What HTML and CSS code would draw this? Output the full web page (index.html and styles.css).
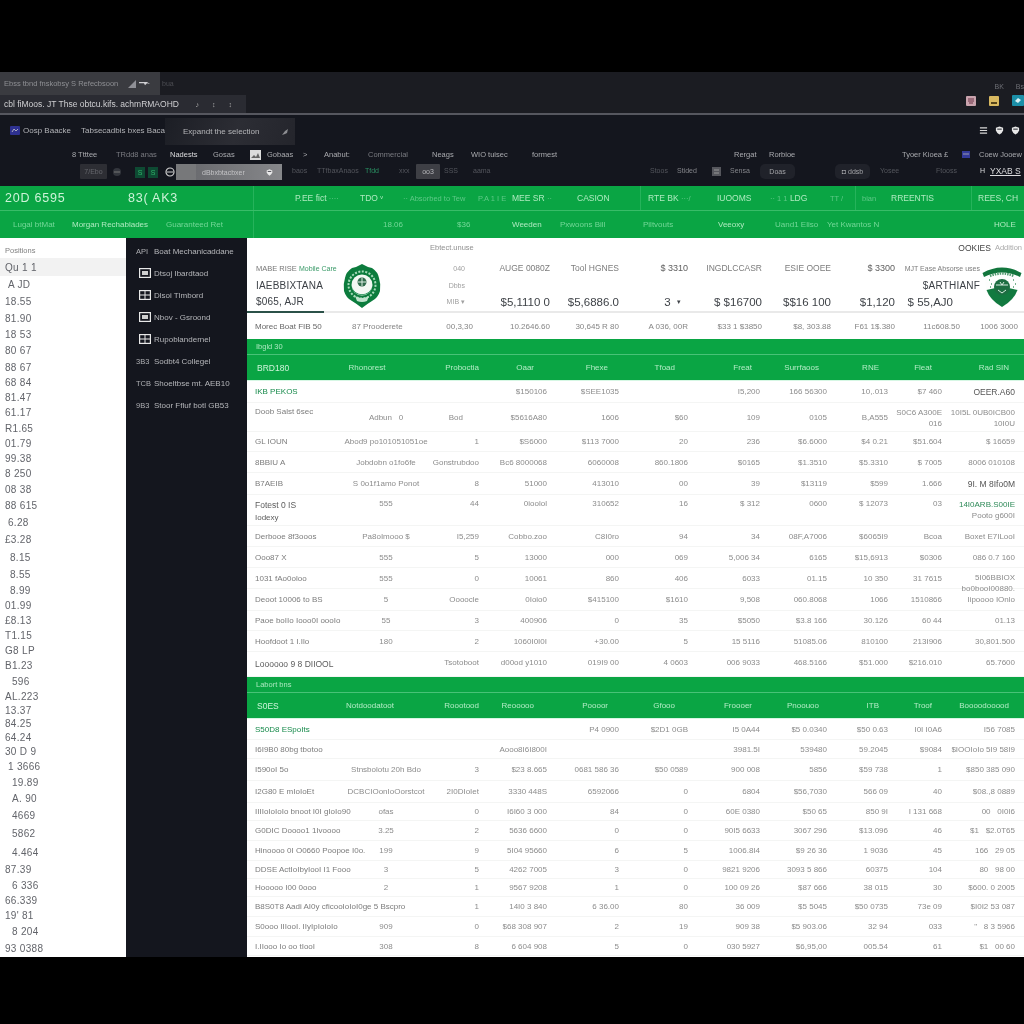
FILE: index.html
```html
<!DOCTYPE html>
<html lang="en">
<head>
<meta charset="utf-8">
<title>Casino ledger</title>
<link rel="stylesheet" href="styles.css">
</head>
<body>
<svg class="defs" width="0" height="0" aria-hidden="true">
  <symbol id="box" viewBox="0 0 12 10"><rect x=".6" y=".6" width="10.8" height="8.8" fill="none" stroke="#e8e8e8" stroke-width="1.2"/><path d="M3 3h6v4H3z" fill="#cfcfcf"/></symbol>
  <symbol id="gridbox" viewBox="0 0 12 10"><rect x=".6" y=".6" width="10.8" height="8.8" fill="none" stroke="#e8e8e8" stroke-width="1.2"/><path d="M6 1v8M1 5h10" stroke="#e8e8e8"/></symbol>
  <symbol id="tag" viewBox="0 0 10 10"><path d="M1 2l4-1.500L9 2v3Q8 8 5 9.500 2 8 1 5z" fill="#e8e8e8"/><path d="M2.500 3.500h5" stroke="#14161e"/></symbol>
</svg>
<div class="frame">
  <header class="chrome">
    <div class="chrome-left">
      <div class="chrome-tabrow">
        <div class="tab-one">
          <span>Ebss tbnd fnskobsy S Refecbsoon</span>
          <svg class="tab-mark" width="24" height="10" viewBox="0 0 24 10"><path d="M0 9L8 1v8z" fill="#8f9096"/><path d="M11 3h8l3 2-3-.800-2 2-1-2h-5z" fill="#d0d0d3"/></svg>
        </div>
        <span class="tab-extra">bua</span>
      </div>
      <div class="tab-two">
        <span class="tab-two-title">cbl fiMoos. JT Thse obtcu.kifs. achmRMAOHD</span>
        <span class="tab-two-tools"><i>♪</i><i>↕</i><i>↕</i></span>
      </div>
    </div>
    <div class="chrome-right">
      <div class="chrome-labels"><span>BK</span><span>Bs</span></div>
      <div class="chrome-apps">
        <svg width="10" height="10" viewBox="0 0 10 10"><rect width="10" height="10" rx="1" fill="#c9a3ad"/><path d="M2 3h6M2 5h6M3 7h4" stroke="#6c3346"/></svg>
        <svg width="10" height="10" viewBox="0 0 10 10"><rect width="10" height="10" rx="1" fill="#d8b860"/><path d="M2 6h6v2H2z" fill="#55431a"/></svg>
        <svg width="12" height="11" viewBox="0 0 12 11"><rect width="12" height="11" rx="1" fill="#1c8fa8"/><path d="M3 6l3-3 3 2-3 3z" fill="#d8f2f7"/></svg>
      </div>
    </div>
  </header>
  <div class="chrome-rule"></div>

  <nav class="nav">
    <div class="nav-a">
      <svg class="nav-a-logo" width="10" height="9" viewBox="0 0 10 9"><rect width="10" height="9" rx="1" fill="#2e3190"/><path d="M2 6l2-3 2 2 2-2" stroke="#aab" fill="none"/></svg>
      <span class="nav-brand">Oosp Baacke</span>
      <span class="nav-title">Tabsecadbis bxes Bacace</span>
      <div class="nav-tab">
        <span>Expandt the selection</span>
        <svg width="8" height="8" viewBox="0 0 8 8"><path d="M1 7l3-4 3-2-1 4-2 1z" fill="#8d8e92"/></svg>
      </div>
      <div class="nav-a-icons">
        <svg width="9" height="9" viewBox="0 0 10 10"><path d="M1 2h8M1 5h8M1 8h8" stroke="#d8d8d8" stroke-width="1.300"/></svg>
        <svg width="9" height="9"><use href="#tag"/></svg>
        <svg width="9" height="9"><use href="#tag"/></svg>
      </div>
    </div>
    <div class="nav-b">
      <span>8 Ttttee</span><span class="dim">TRdd8 anas</span><span class="hi">Nadests</span><span>Gosas</span>
      <svg width="11" height="10" viewBox="0 0 11 10"><rect width="11" height="10" fill="#dcdcdc"/><path d="M1 8l3-3 2 2 2-4 2 5z" fill="#666"/></svg>
      <span>Gobaas</span><span>&gt;</span><span>Anabut:</span><span class="dim">Commercial</span><span>Neags</span><span>WIO tuisec</span><span>formest</span><span>Rergat</span><span>Rorbioe</span><span>Tyoer Kioea £</span>
      <svg width="8" height="7" viewBox="0 0 8 7"><rect width="8" height="7" fill="#343a9a"/><path d="M1 3h6" stroke="#99a"/></svg>
      <span>Coew Jooew</span>
    </div>
    <div class="nav-c">
      <span class="chip chip-dim">7/Ebo</span>
      <svg width="10" height="10" viewBox="0 0 10 10"><circle cx="5" cy="5" r="4" fill="#33363d"/><path d="M2 5h6" stroke="#777"/></svg>
      <span class="chip-green">S</span>
      <span class="chip-green">S</span>
      <svg width="10" height="10" viewBox="0 0 10 10"><circle cx="5" cy="5" r="4" fill="none" stroke="#cfcfcf" stroke-width="1.200"/><path d="M2 5h6" stroke="#cfcfcf"/></svg>
      <span class="chip-light"></span>
      <div class="search"><span>dBbxbtacbxer</span><svg width="7" height="7"><use href="#tag"/></svg></div>
      <span></span>
      <span class="fade">baos</span><span class="fade">TTfbaxAnaos</span><span class="fade-green">Tfdd</span><span class="fade">xxx</span>
      <span class="chip chip-mid">oo3</span><span class="fade">SSS</span><span class="fade">aama</span>
      <span class="fade">Stoos</span><span class="soft">Stided</span>
      <svg width="9" height="9" viewBox="0 0 9 9"><rect width="9" height="9" fill="#55565c"/><path d="M2 3h5M2 6h5" stroke="#999"/></svg>
      <span class="soft">Sensa</span>
      <span class="chip chip-wide">Doas</span>
      <span class="chip chip-wide">◘ ddsb</span>
      <span class="fade">Yosee</span><span class="fade">Ftooss</span><span class="hi">H</span><span class="hi under">YXAB S</span>
    </div>
  </nav>

  <section class="band">
    <div class="band-a">
      <span class="band-big">20D 6595</span><span class="band-big">83( AK3</span><i class="sep"></i>
      <span>P.EE fict <em>····</em></span><span>TDO ᵛ</span><span><em>·· Absorbed to Tew</em></span><span><em>P.A 1 I E</em></span><span>MEE SR <em>··</em></span><span>CASION</span><i class="sep"></i>
      <span>RTE BK <em>···/</em></span><span>IUOOMS</span><span><em>·· 1 1</em> LDG</span><span><em>TT /</em></span><i class="sep"></i>
      <span><em>bian</em></span><span>RREENTIS</span><i class="sep"></i><span>REES, CH</span>
    </div>
    <div class="band-b">
      <span class="dimg">Lugal btMat</span><span>Morgan Rechablades</span><span class="dimg">Guaranteed Ret</span><i class="sep"></i>
      <span class="dimg">18.06</span><span class="dimg">$36</span><span>Weeden</span><span class="dimg">Pxwoons Bill</span><span class="dimg">Piltvouts</span><span>Veeoxy</span><span class="dimg">Uand1 Eliso</span><span class="dimg">Yet Kwantos N</span><span>HOLE</span>
    </div>
  </section>

  <div class="work">
    <aside class="ledger">
      <div class="ledger-head">Positions</div>
      <ol class="ledger-list">
        <li class="sel">Qu 1 1</li>
        <li class="in1">A JD</li><li>18.55</li><li>81.90</li><li>18 53</li><li>80 67</li><li>88 67</li><li>68 84</li><li>81.47</li><li>61.17</li><li>R1.65</li><li>01.79</li><li>99.38</li><li>8 250</li><li>08 38</li><li>88 615</li><li class="in1">6.28</li><li>£3.28</li><li class="in2">8.15</li><li class="in2">8.55</li><li class="in2">8.99</li><li>01.99</li><li>£8.13</li><li>T1.15</li><li>G8 LP</li><li>B1.23</li><li class="in3">596</li><li>AL.223</li><li>13.37</li><li>84.25</li><li>64.24</li><li>30 D 9</li><li class="in1">1 3666</li><li class="in3">19.89</li><li class="in3">A. 90</li><li class="in3">4669</li><li class="in3">5862</li><li class="in3">4.464</li><li>87.39</li><li class="in3">6 336</li><li>66.339</li><li>19' 81</li><li class="in3">8 204</li><li>93 0388</li>
      </ol>
    </aside>
    <aside class="side">
      <div class="side-item"><span class="side-code">API</span><span>Boat Mechanicaddane</span></div>
      <div class="side-item"><svg class="side-ic"><use href="#box"/></svg><span>Dtsoj Ibardtaod</span></div>
      <div class="side-item"><svg class="side-ic"><use href="#gridbox"/></svg><span>Dlsoi Tlmbord</span></div>
      <div class="side-item"><svg class="side-ic"><use href="#box"/></svg><span>Nbov - Gsroond</span></div>
      <div class="side-item"><svg class="side-ic"><use href="#gridbox"/></svg><span>Rupoblandernel</span></div>
      <div class="side-item"><span class="side-code">3B3</span><span>Sodbt4 Collegel</span></div>
      <div class="side-item"><span class="side-code">TCB</span><span>Shoeltbse mt. AEB10</span></div>
      <div class="side-item"><span class="side-code">9B3</span><span>Stoor Ffluf botl GB53</span></div>
    </aside>
    <main class="main">
      <div class="summary">
        <div class="sum-grid sum-top">
          <span class="sum-note">Ebtect.unuse</span>
          <span class="sum-corner"><b>OOKIES</b> Addition</span>

          <span class="sum-name r2"><span>MABE RISE <u>Mobile Care</u></span></span>
          <svg class="crest" viewBox="0 0 38 44" width="38" height="44">
            <path d="M19 0Q24 3 29 4 35 8 36 14 38 20 37 27 35 34 29 37 24 40 19 44 14 40 9 37 3 34 1 27 0 20 2 14 3 8 9 4 14 3 19 0Z" fill="#0c7c3d"/>
            <circle cx="19" cy="21" r="13.500" fill="none" stroke="#a8dcbb" stroke-width="2" stroke-dasharray="2 1.500"/>
            <circle cx="19" cy="21" r="10.500" fill="#f2f8f3"/>
            <path d="M9 23a10.500 10.500 0 0 0 20 0 10 8 0 0 1-20 0z" fill="#12894a"/>
            <circle cx="19" cy="18" r="4.500" fill="#2f6b4b"/>
            <path d="M19 14v8M15 18h8" stroke="#dcefe3"/>
            <path d="M12 32q7 4 14 0l-2 5q-5 2-10 0z" fill="#bfe3cd"/>
          </svg>
          <span class="sum-label c3 r2">040</span><span class="sum-label r2">AUGE 0080Z</span><span class="sum-label r2">Tool HGNES</span><span class="sum-label sum-dark r2">$ 3310</span><span class="sum-label r2">INGDLCCASR</span><span class="sum-label r2">ESIE OOEE</span><span class="sum-label sum-dark r2">$ 3300</span>
          <span class="sum-label sum-wide r2">MJT Ease Absorse uses</span>
          <svg class="shield" viewBox="0 0 40 42" width="40" height="42">
            <path d="M3 11Q20 3 37 11L36 26Q32 36 20 42 8 36 4 26Z" fill="#fdfefd"/>
            <path d="M.5 8Q20-3 39.500 8L38 12Q20 3 2 12Z" fill="#12763d"/>
            <path d="M8 11Q20 6 32 11" stroke="#4f9a6e" stroke-width="2.500" stroke-dasharray="1.500 1" fill="none"/>
            <path d="M4.500 25Q20 20 35.500 25 32 35 20 42 8 35 4.500 25Z" fill="#127a40"/>
            <ellipse cx="20" cy="22" rx="8" ry="8" fill="#1d6e42"/>
            <path d="M14 20h12M16 25l4 3 4-3M18 17l2 3 2-3" stroke="#d9ece0" fill="none"/>
            <path d="M7 15h1M9 19h1M31 15h1M33 19h1M8 22h1M31 22h1" stroke="#4d9a6e" stroke-width="1.500"/>
          </svg>

          <span class="sum-name sum-head r3">IAEBBIXTANA</span>
          <span class="sum-label c3 r3">Dbbs</span>
          <span class="sum-head sum-rt r3">$ARTHIANF</span>

          <span class="sum-name sum-head r4">$065, AJR</span>
          <span class="sum-label c3 r4">MIB ▾</span>
          <span class="sum-big r4">$5,1110 0</span><span class="sum-big r4">$5,6886.0</span><span class="sum-big sum-pick r4">3 &nbsp;<small>▾</small></span><span class="sum-big r4">$ $16700</span><span class="sum-big r4">$$16 100</span><span class="sum-big r4">$1,120</span><span class="sum-big sum-last r4">$ 55,AJ0</span>
        </div>
        <div class="sum-rule"><i></i></div>
        <div class="sum-grid sum-foot">
          <span class="foot-name">Morec Boat FIB 50</span>
          <span class="foot-two">87 Prooderete</span>
          <span>00,3,30</span><span>10.2646.60</span><span>30,645 R 80</span><span>A 036, 00R</span><span>$33 1 $3850</span><span>$8, 303.88</span><span>F61 1$.380</span><span class="foot-j">11c608.50</span><span class="foot-k">1006 3000</span>
        </div>
      </div>

      <section class="sheet">
        <div class="sheet-label">Ibgld 30</div>
        <div class="tgrid thead">
          <span class="th-first">BRD180</span><span class="th-two">Rhonorest</span><span>Proboctia</span><span>Oaar</span><span>Fhexe</span><span>Tfoad</span><span>Freat</span><span>Surrfaoos</span><span>RNE</span><span>Fleat</span><span>Rad SIN</span>
        </div>
        <div class="tgrid tbody tb-one">
          <span class="green">IKB PEKOS</span><span></span><span></span><span>$150106</span><span>$SEE1035</span><span></span><span>I5,200</span><span>166 56300</span><span>10,.013</span><span>$7 460</span><span class="ink">OEER.A60</span>
          <span class="top">Doob Salst 6sec</span><span class="cn">Adbun &nbsp; 0</span><span class="pull">Bod</span><span>$5616A80</span><span>1606</span><span>$60</span><span>109</span><span>0105</span><span>B,A555</span><span class="stack">S0C6 A300E<br>016</span><span class="stack">10I5L 0UB0ICB00<br>10I0U</span>
          <span class="name">GL IOUN</span><span class="cn">Abod9 po101051051oe</span><span>1</span><span>$S6000</span><span>$113 7000</span><span>20</span><span>236</span><span>$6.6000</span><span>$4 0.21</span><span>$51.604</span><span>$ 16659</span>
          <span class="name">8BBIU A</span><span class="cn">Jobdobn o1fo6fe</span><span>Gonstrubdoo</span><span>Bc6 8000068</span><span>6060008</span><span>860.1806</span><span>$0165</span><span>$1.3510</span><span>$5.3310</span><span>$ 7005</span><span>8006 010108</span>
          <span class="name">B7AEIB</span><span class="cn">S 0o1f1amo Ponot</span><span>8</span><span>51000</span><span>413010</span><span>00</span><span>39</span><span>$13119</span><span>$599</span><span>1.666</span><span class="ink">9I. M 8Ifo0M</span>
          <span class="top name-big">Fotest 0 IS<br><small>Iodexy</small></span><span class="cn top">555</span><span class="top">44</span><span class="top">0ioolol</span><span class="top">310652</span><span class="top">16</span><span class="top">$ 312</span><span class="top">0600</span><span class="top">$ 12073</span><span class="top">03</span><span class="stack"><b>14I0ARB.S00IE</b><br>Pooto g600I</span>
          <span>Derbooe 8f3ooos</span><span class="cn">Pa8oImooo $</span><span>I5,259</span><span>Cobbo.zoo</span><span>C8I0ro</span><span>94</span><span>34</span><span>08F,A7006</span><span>$6065I9</span><span>Bcoa</span><span>Boxet E7ILooI</span>
          <span>Ooo87 X</span><span class="cn">555</span><span>5</span><span>13000</span><span>000</span><span>069</span><span>5,006 34</span><span>6165</span><span>$15,6913</span><span>$0306</span><span>086 0.7 160</span>
          <span>1031 fAo0oloo</span><span class="cn">555</span><span>0</span><span>10061</span><span>860</span><span>406</span><span>6033</span><span>01.15</span><span>10 350</span><span>31 7615</span><span class="stack">5I06BBIOX<br>bo0booI00880.</span>
          <span>Deoot 10006 to BS</span><span class="cn">5</span><span>Oooocle</span><span>0Ioio0</span><span>$415100</span><span>$1610</span><span>9,508</span><span>060.8068</span><span>1066</span><span>1510866</span><span>Iipoooo IOnlo</span>
          <span>Paoe boIIo Iooo0I oooIo</span><span class="cn">55</span><span>3</span><span>400906</span><span>0</span><span>35</span><span>$5050</span><span>$3.8 166</span><span>30.126</span><span>60 44</span><span>01.13</span>
          <span>Hoofdoot 1 I.Ilo</span><span class="cn">180</span><span>2</span><span>1060I0I0I</span><span>+30.00</span><span>5</span><span>15 5116</span><span>51085.06</span><span>810100</span><span>213I906</span><span>30,801.500</span>
          <span class="name-big last">Loooooo 9 8 DIIOOL</span><span></span><span class="last">Tsotoboot</span><span class="last">d00od y1010</span><span class="last">019I9 00</span><span class="last">4 0603</span><span class="last">006 9033</span><span class="last">468.5166</span><span class="last">$51.000</span><span class="last">$216.010</span><span class="last">65.7600</span>
        </div>
      </section>

      <section class="sheet">
        <div class="sheet-label">Labort bns</div>
        <div class="tgrid thead">
          <span class="th-first">S0ES</span><span class="th-two">Notdoodatoot</span><span>Roootood</span><span>Reooooo</span><span>Poooor</span><span>Gfooo</span><span>Froooer</span><span>Pnoouoo</span><span>ITB</span><span>Troof</span><span>Boooodooood</span>
        </div>
        <div class="tgrid tbody tb-two">
          <span class="green">S50D8 ESpoIts</span><span></span><span></span><span></span><span>P4 0900</span><span>$2D1 0GB</span><span>I5 0A44</span><span>$5 0.0340</span><span>$50 0.63</span><span>I0I I0A6</span><span>I56 7085</span>
          <span>I6I9B0 80bg tbotoo</span><span></span><span></span><span>Aooo8I6I800I</span><span></span><span></span><span>3981.5I</span><span>539480</span><span>59.2045</span><span>$9084</span><span>$IOOIoIo 5I9 58I9</span>
          <span>I590oI 5o</span><span class="cn">Stnsbolotu 20h Bdo</span><span>3</span><span>$23 8.665</span><span>0681 586 36</span><span>$50 0589</span><span>900 008</span><span>5856</span><span>$59 738</span><span>1</span><span>$850 385 090</span>
          <span>I2G80 E mIoIoEt</span><span class="cn">DCBCIOonIoOorstcot</span><span>2I0DIoIet</span><span>3330 448S</span><span>6592066</span><span>0</span><span>6804</span><span>$56,7030</span><span>566 09</span><span>40</span><span>$08.,8 0889</span>
          <span>IIIIoIoIoIo bnoot I0I gIoIo90</span><span class="cn">ofas</span><span>0</span><span>I6I60 3 000</span><span>84</span><span>0</span><span>60E 0380</span><span>$50 65</span><span>850 9I</span><span>I 131 668</span><span>00 &nbsp; 0I0I6</span>
          <span>G0DIC Doooo1 1Ivoooo</span><span class="cn">3.25</span><span>2</span><span>5636 6600</span><span>0</span><span>0</span><span>90I5 6633</span><span>3067 296</span><span>$13.096</span><span>46</span><span>$1 &nbsp; $2.0T65</span>
          <span>Hinoooo 0I O0660 Poopoe I0o.</span><span class="cn">199</span><span>9</span><span>5I04 95660</span><span>6</span><span>5</span><span>1006.8I4</span><span>$9 26 36</span><span>1 9036</span><span>45</span><span>166 &nbsp; 29 05</span>
          <span>DDSE ActIoIbyIooI I1 Fooo</span><span class="cn">3</span><span>5</span><span>4262 7005</span><span>3</span><span>0</span><span>9821 9206</span><span>3093 5 866</span><span>60375</span><span>104</span><span>80 &nbsp; 98 00</span>
          <span>Hooooo I00 0ooo</span><span class="cn">2</span><span>1</span><span>9567 9208</span><span>1</span><span>0</span><span>100 09 26</span><span>$87 666</span><span>38 015</span><span>30</span><span>$600. 0 2005</span>
          <span>B8S0T8 Aadi AI0y cficooIoIoI0ge 5 Bscpro</span><span></span><span>1</span><span>14I0 3 840</span><span>6 36.00</span><span>80</span><span>36 009</span><span>$5 5045</span><span>$50 0735</span><span>73e 09</span><span>$I0I2 53 087</span>
          <span>S0ooo IIIooI. IIyIpIoIoIo</span><span class="cn">909</span><span>0</span><span>$68 308 907</span><span>2</span><span>19</span><span>909 38</span><span>$5 903.06</span><span>32 94</span><span>033</span><span>" &nbsp; 8 3 5966</span>
          <span>I.IIooo Io oo tIooI</span><span class="cn">308</span><span>8</span><span>6 604 908</span><span>5</span><span>0</span><span>030 5927</span><span>$6,95,00</span><span>005.54</span><span>61</span><span>$1 &nbsp; 00 60</span>
        </div>
      </section>
    </main>
  </div>
</div>
</body>
</html>
```

FILE: styles.css
```css
* { box-sizing: border-box; }
html, body { margin: 0; height: 100%; background: #000; }
body {
  padding-top: 72px;
  overflow: hidden;
  font-family: "Liberation Sans", Arial, sans-serif;
  font-size: 8.5px;
  color: #777;
}
.defs { position: absolute; }
.frame { width: 1024px; height: 885px; display: flex; flex-direction: column; overflow: hidden; background: #14161e; filter: blur(.3px); }

/* Top chrome */
.chrome { height: 41px; flex: none; display: flex; justify-content: space-between; background: #1b1c22; white-space: nowrap; }
.chrome-left { display: flex; flex-direction: column; }
.chrome-tabrow { display: flex; align-items: center; height: 23px; }
.tab-one { width: 160px; height: 23px; padding: 0 8px 0 4px; display: flex; align-items: center; justify-content: space-between; background: #3a3b40; color: #8e8f93; font-size: 7.5px; }
.tab-extra { margin-left: 2px; color: #4c4d53; font-size: 7px; }
.tab-two { width: 246px; height: 18px; padding: 0 14px 0 4px; display: flex; align-items: center; justify-content: space-between; background: #2a2b32; color: #cfcfd2; font-size: 8.5px; }
.tab-two-tools { display: flex; gap: 13px; color: #aaa; }
.tab-two-tools i { font-style: normal; font-size: 7px; }
.chrome-right { display: flex; flex-direction: column; align-items: flex-end; padding: 7px 0 0; }
.chrome-labels { display: flex; gap: 12px; height: 14px; align-items: center; color: #6d6e74; font-size: 7px; }
.chrome-apps { display: flex; gap: 13px; margin-top: 2px; align-items: center; }
.chrome-rule { height: 2px; flex: none; background: #56575f; }

/* Dark navigation */
.nav { height: 71px; flex: none; background: #14161e; color: #a9aaae; }
.nav-a { height: 30px; padding-left: 10px; display: grid; grid-template-columns: 13px 58px 84px 130px 1fr; align-items: center; white-space: nowrap; font-size: 8px; }
.nav-brand, .nav-title { color: #b2b3b7; }
.nav-tab { height: 27px; align-self: end; padding: 0 6px 0 18px; display: flex; align-items: center; justify-content: space-between; background: linear-gradient(110deg, #1c1e25, #2c2d34 55%, #24252c); color: #b4b5b8; }
.nav-a-icons { display: flex; justify-content: flex-end; align-items: center; gap: 7px; padding-right: 4px; }
.nav-b { height: 19px; padding-left: 72px; display: grid; grid-template-columns: 44px 54px 43px 37px 17px 36px 21px 44px 64px 39px 61px 202px 35px 133px 60px 17px 45px; align-items: center; white-space: nowrap; font-size: 7.5px; }
.dim { color: #7a7b81; }
.hi { color: #dcdcde; }
.nav-c { height: 22px; padding-left: 80px; display: grid; grid-template-columns: 32px 23px 13px 17px 11px 20px 86px 10px 25px 48px 34px 17px 28px 29px 177px 27px 35px 18px 30px 75px 45px 56px 44px 10px 34px; align-items: start; white-space: nowrap; font-size: 7px; }
.nav-c > * { margin-top: 3px; }
.nav-c > .chip, .nav-c > .search, .nav-c > .chip-light { margin-top: 0; }
.chip { height: 15px; display: flex; align-items: center; justify-content: center; border-radius: 1px; }
.chip-dim { width: 27px; background: #2d2e34; color: #66676d; }
.chip-mid { width: 24px; background: #3e3f45; color: #b5b6ba; }
.chip-wide { width: 35px; background: #20222a; color: #a3a4a8; border-radius: 5px; }
.chip-green { width: 10px; height: 11px; background: #0e4a33; color: #2fb56a; display: flex; align-items: center; justify-content: center; font-size: 7px; }
.chip-light { height: 16px; background: #77787a; }
.search { height: 16px; padding: 0 9px 0 6px; display: flex; align-items: center; justify-content: space-between; background: linear-gradient(90deg, #6b6c70, #86878a); color: #c3c3c5; }
.fade { color: #54565d; }
.fade-green { color: #2a8f62; }
.soft { color: #84858a; }
.under { text-decoration: underline; font-size: 8.5px; margin-top: 2px !important; }

/* Green band */
.band { height: 52px; flex: none; background: #0aa544; color: #aeeabf; }
.band-a { height: 25px; padding-left: 5px; display: grid; grid-template-columns: 123px 125px 42px 65px 43px 75px 34px 65px 63px 8px 69px 53px 60px 25px 7px 29px 80px 7px 46px; align-items: center; white-space: nowrap; font-size: 8.5px; border-bottom: 1px solid #38bc68; }
.band-a em { font-style: normal; color: #5ec987; font-size: 7.5px; }
.band-big { font-size: 12.5px; letter-spacing: .8px; color: #cdf3d8; }
.band-b { height: 27px; padding-left: 13px; display: grid; grid-template-columns: 59px 94px 87px 130px 74px 55px 48px 83px 75px 57px 52px 167px 30px; align-items: center; white-space: nowrap; font-size: 8px; }
.dimg { color: #74d898; }
.sep { align-self: stretch; border-left: 1px solid #26b35b; }

/* Work area */
.work { flex: 1; min-height: 0; display: grid; grid-template-columns: 126px 121px 1fr; }

.ledger { background: #fff; }
.ledger-head { height: 20px; padding: 4px 0 0 5px; display: flex; align-items: center; font-size: 7.5px; color: #808080; }
.ledger-list { list-style: none; margin: 0; padding: 0; display: grid; font-size: 10px; color: #62646a; letter-spacing: .3px; grid-template-rows: 18px 17px 17px 16px 16px 17px 16px 15px 15px 15px 16px 15px 15px 15px 16px 17px 16px 18px 18px 17px 15px 15px 15px 15px 15px 15px 16px 15px 13px 13px 14px 14px 16px 16px 17px 17px 19px 18px 16px 16px 15px 15px 17px 17px; }
.ledger-list li { display: flex; align-items: center; padding-left: 5px; white-space: nowrap; }
.ledger-list .sel { background: #f2f2f2; }
.ledger-list .in1 { padding-left: 8px; }
.ledger-list .in2 { padding-left: 10px; }
.ledger-list .in3 { padding-left: 12px; }

.side { background: #14161e; padding-top: 2px; color: #b5b6ba; font-size: 8px; }
.side-item { height: 22px; padding-left: 10px; display: flex; align-items: center; white-space: nowrap; }
.side-code { width: 18px; flex: none; font-size: 7.5px; color: #aeafb3; }
.side-ic { width: 12px; height: 10px; margin: 0 3px 0 3px; flex: none; }

.main { background: #fff; min-width: 0; }

/* Summary block */
.summary { height: 101px; }
.sum-grid { display: grid; grid-template-columns: 96px 50px 80px 77px 69px 69px 74px 69px 64px 85px 44px; white-space: nowrap; }
.sum-top { grid-template-rows: 19px 22px 13px 19px; height: 73px; }
.sum-top > span { display: flex; align-items: center; justify-content: flex-end; color: #7c7c7c; }
.r2 { grid-row: 2; }
.r3 { grid-row: 3; }
.r4 { grid-row: 4; }
.sum-top > .sum-note { grid-column: 3; grid-row: 1; justify-content: flex-start; padding-left: 37px; color: #909090; font-size: 7.5px; }
.sum-top > .sum-corner { grid-column: 8 / -1; grid-row: 1; padding-right: 2px; color: #aaa; font-size: 7.5px; }
.sum-corner b { color: #444; margin-right: 4px; font-weight: 400; font-size: 8.5px; }
.sum-top > .sum-name { grid-column: 1; justify-content: flex-start; padding-left: 9px; color: #777; font-size: 7.5px; }
.sum-name u { color: #3a9a68; text-decoration: none; font-size: 7px; }
.sum-top > .sum-head { color: #3c4046; font-size: 10px; letter-spacing: .2px; }
.crest { grid-column: 2; grid-row: 2 / 5; margin: 7px 0 0 0; align-self: start; }
.shield { grid-column: 11; grid-row: 2 / 5; margin: 8px 0 0 2px; align-self: start; }
.sum-top > .c3 { grid-column: 3; padding-right: 8px; color: #a0a0a0; font-size: 7px; }
.sum-top > .sum-dark { color: #606060; font-size: 9px; }
.sum-top > .sum-wide { grid-column: 10; font-size: 7px; }
.sum-top > .sum-rt { grid-column: 10; }
.sum-top > .sum-big { font-size: 11.5px; color: #3f4348; padding-top: 1px; }
.sum-top > .sum-pick { padding-right: 7px; }
.sum-pick small { font-size: 7px; }
.sum-top > .sum-last { padding-right: 27px; }
.sum-rule { height: 2px; background: #e9e9e9; }
.sum-rule i { display: block; width: 77px; height: 2px; background: #2b5148; }
.sum-foot { height: 26px; align-items: center; color: #858585; font-size: 8px; }
.sum-foot > span { text-align: right; }
.sum-foot > .foot-name { text-align: left; padding-left: 8px; font-size: 8px; color: #666; }
.sum-foot > .foot-two { text-align: left; padding-left: 9px; }
.sum-foot > .foot-j { padding-right: 20px; }
.sum-foot > .foot-k { padding-right: 6px; }

/* Data tables */
.sheet-label { height: 16px; padding-left: 9px; display: flex; align-items: center; background: #0aa544; color: #a9e8be; font-size: 7.5px; border-bottom: 1px solid #48c277; }
.tgrid { display: grid; grid-template-columns: 99px 80px 53px 68px 72px 69px 72px 67px 61px 54px 82px; white-space: nowrap; }
.thead { height: 26px; align-items: center; background: #0aa544; color: #b2ecc5; border-bottom: 1px solid #d6f7e4; font-size: 8px; }
.thead span { text-align: right; padding-right: 8px; }
.thead span:nth-child(3) { padding-right: 0; }
.thead span:nth-child(4) { padding-right: 13px; }
.thead span:nth-child(5) { padding-right: 11px; }
.thead span:nth-child(6) { padding-right: 13px; }
.thead span:nth-child(9) { padding-right: 9px; }
.thead span:nth-child(10) { padding-right: 10px; }
.thead .th-first { text-align: left; padding-left: 10px; color: #cff4da; font-size: 8.5px; }
.thead .th-two { text-align: center; padding-right: 38px; }
.thead span:last-child { padding-right: 15px; }

.tbody { font-size: 8px; }
.tbody > span { display: flex; align-items: center; justify-content: flex-end; text-align: right; border-bottom: 1px solid #f4f5f4; color: #8c8c8c; }
.tbody > span:nth-child(11n+1) { justify-content: flex-start; text-align: left; padding-left: 8px; color: #7c7c7c; }
.tbody > span:nth-child(11n) { padding-right: 9px; }
.tbody > .cn { justify-content: center; }
.tbody > .pull { padding-right: 16px; }
.tbody > .top { align-items: flex-start; padding-top: 4px; }
.tbody > .stack { display: block; line-height: 11px; padding-top: 4px; }
.tbody > .stack b { font-weight: 400; color: #2e8a58; }
.tbody > .last { align-items: flex-start; padding-top: 6px; }
.tbody > .green { color: #178a4b !important; }
.tbody > .ink { color: #555; font-size: 8.5px; }
.tbody > .name-big { color: #5c5c5c !important; font-size: 8.5px; line-height: 12px; }
.tbody > .name-big small { font-size: 8px; }
.tbody > .name-big.top { display: block; }
.tb-one { height: 296px; grid-template-rows: 22px 29px 20px 21px 22px 31px 21px 21px 21px 22px 20px 21px 25px; }
.tb-two { height: 237px; grid-template-rows: 21px 19px 22px 22px 18px 20px 20px 18px 18px 20px 20px 19px; }
```
